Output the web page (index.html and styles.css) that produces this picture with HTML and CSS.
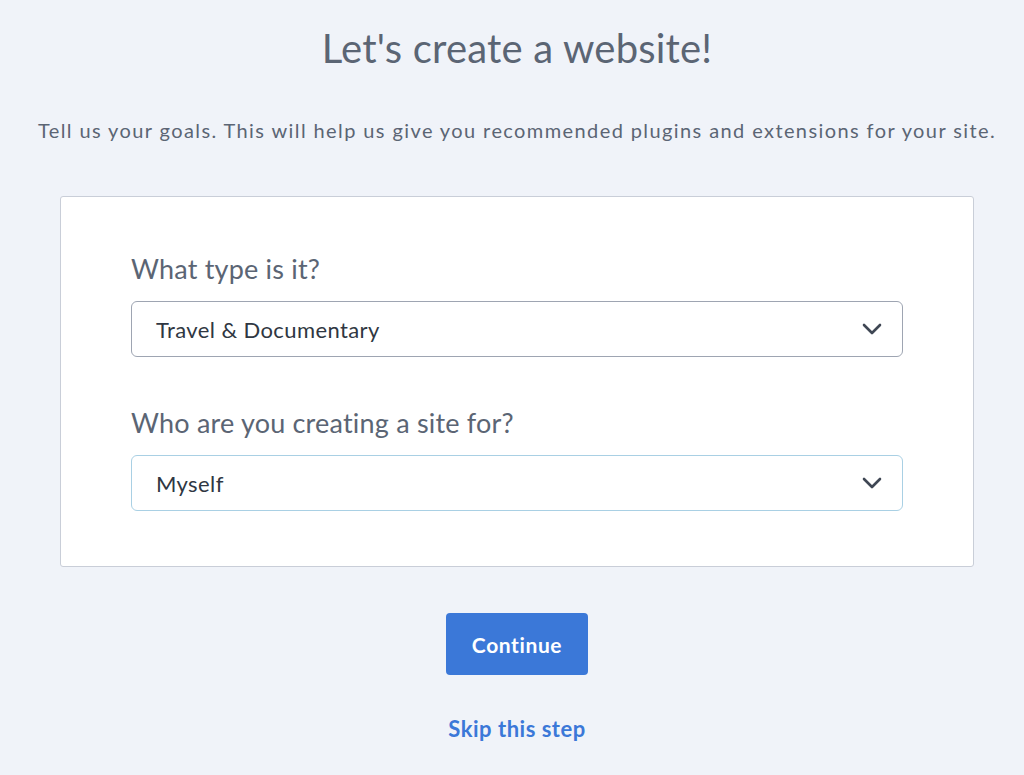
FILE: index.html
```html
<!DOCTYPE html>
<html lang="en">
<head>
	<meta charset="UTF-8">
	<title>Let's create a website!</title>
	<link rel="stylesheet" href="styles.css">
</head>
<body>

<div class="page">
	<h1 class="title">Let's create a website!</h1>
	<p class="intro">Tell us your goals. This will help us give you recommended plugins and extensions for your site.</p>

	<div class="card">
		<div class="field">
			<label class="field-label">What type is it?</label>
			<div class="select">
				<span>Travel &amp; Documentary</span>
				<svg class="chevron" width="20" height="12" viewBox="0 0 20 12"><path d="M2 2l8 8 8-8" fill="none" stroke="#3f4754" stroke-width="2.6" stroke-linecap="round" stroke-linejoin="round"/></svg>
			</div>
		</div>
		<div class="field">
			<label class="field-label">Who are you creating a site for?</label>
			<div class="select select-focus">
				<span>Myself</span>
				<svg class="chevron" width="20" height="12" viewBox="0 0 20 12"><path d="M2 2l8 8 8-8" fill="none" stroke="#3f4754" stroke-width="2.6" stroke-linecap="round" stroke-linejoin="round"/></svg>
			</div>
		</div>
	</div>

	<button class="btn-continue">Continue</button>
	<a class="skip" href="#">Skip this step</a>
</div>

</body>
</html>
```

FILE: styles.css
```css
body {
	background-color: #f0f3f9;
	font-family: Lato, "Open Sans", sans-serif;
	color: #5b6574;
	margin: 0;
}
.page {
	display: flex;
	flex-direction: column;
	align-items: center;
	padding-left: 10px;
}
.title {
	font-size: 40px;
	font-weight: 400;
	letter-spacing: 0.2px;
	margin: 26px 0 0;
	line-height: 44px;
}
.intro {
	font-size: 20px;
	letter-spacing: 1.4px;
	margin: 48px 0 0;
	line-height: 24px;
	white-space: nowrap;
}
.card {
	box-sizing: border-box;
	width: 914px;
	margin-top: 54px;
	background: #fff;
	border: 1px solid #c9ced8;
	border-radius: 3px;
	padding: 56px 70px 55px;
	display: flex;
	flex-direction: column;
	gap: 50px;
}
.field-label {
	display: block;
	font-size: 27px;
	letter-spacing: 0.2px;
	line-height: 32px;
	margin-bottom: 16px;
}
.select {
	height: 56px;
	box-sizing: border-box;
	border: 1px solid #9ea5b2;
	border-radius: 6px;
	display: flex;
	align-items: center;
	justify-content: space-between;
	padding: 0 20px 0 24px;
	font-size: 22px;
	letter-spacing: 0.4px;
	color: #2f3742;
}
.select-focus {
	border-color: #a9d0e4;
}
.btn-continue {
	margin-top: 46px;
	width: 142px;
	height: 62px;
	background: #3b78d8;
	color: #fff;
	border: none;
	border-radius: 4px;
	font-family: inherit;
	font-size: 21px;
	letter-spacing: 0.6px;
	font-weight: 700;
}
.skip {
	margin-top: 40px;
	color: #3b78d8;
	font-size: 22px;
	letter-spacing: 0.5px;
	font-weight: 700;
	text-decoration: none;
}
```
